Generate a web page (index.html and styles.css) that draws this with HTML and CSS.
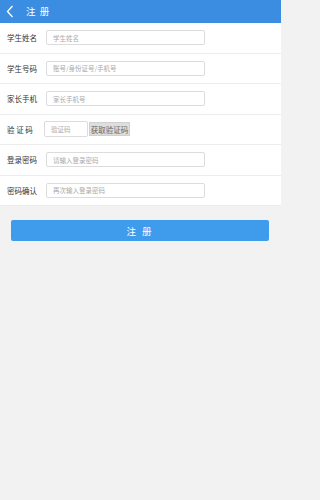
FILE: index.html
```html
<!DOCTYPE html>
<html lang="zh">
<head>
<meta charset="utf-8">
<title>注册</title>
<link rel="stylesheet" href="styles.css">
</head>
<body>
<header class="topbar">
  <span class="back">
    <svg width="8" height="13" viewBox="0 0 8 13"><path d="M6.5 1 L1.5 6.5 L6.5 12" fill="none" stroke="#fff" stroke-width="1.3"/></svg>
  </span>
  <span class="title">注 册</span>
</header>
<main class="form">
  <div class="row"><label class="label">学生姓名</label><input class="field" placeholder="学生姓名"></div>
  <div class="row"><label class="label">学生号码</label><input class="field" placeholder="账号/身份证号/手机号"></div>
  <div class="row"><label class="label">家长手机</label><input class="field" placeholder="家长手机号"></div>
  <div class="row"><label class="label label-code">验 证 码</label><input class="field field-code" placeholder="验证码"><button class="getcode">获取验证码</button></div>
  <div class="row"><label class="label">登录密码</label><input class="field" type="password" placeholder="请输入登录密码"></div>
  <div class="row"><label class="label">密码确认</label><input class="field" type="password" placeholder="再次输入登录密码"></div>
</main>
<div class="actions">
  <button class="submit">注 册</button>
</div>
</body>
</html>
```

FILE: styles.css
```css
* { box-sizing: border-box; }
html, body { margin: 0; padding: 0; }
html { background: #f2f2f2; }
body {
  background: #f2f2f2;
  font-family: "Noto Sans CJK SC", "Noto Sans", sans-serif;
  width: 281px;
  min-height: 500px;
}
.topbar {
  height: 23px;
  background: #3b8de2;
  display: flex;
  align-items: center;
  padding-left: 6px;
  color: #fff;
}
.back { display: flex; align-items: center; width: 20px; }
.title { font-size: 9.5px; letter-spacing: 1px; line-height: 1; }
.form { background: #fff; }
.row {
  height: 30.5px;
  border-bottom: 1px solid #ececec;
  display: flex;
  align-items: center;
  padding-left: 7px;
}
.label {
  width: 39px;
  font-size: 7.5px;
  color: #333;
  line-height: 1;
}
.label-code { width: 37px; }
.field {
  width: 159px;
  height: 15px;
  border: 1px solid #dcdcdc;
  border-radius: 2px;
  padding: 0 6px;
  font-family: inherit;
  font-size: 6.5px;
  color: #333;
  outline: none;
  background: #fff;
}
.field::placeholder { color: #aaa; }
.field-code { width: 44px; height: 16px; }
.getcode {
  margin-left: 1px;
  width: 41px;
  height: 14px;
  padding: 0;
  border: 1px solid #d0d0d0;
  background: #dedede;
  color: #666;
  font-family: inherit;
  font-size: 7.5px;
  line-height: 1;
}
.actions { padding: 14px 12px 0 11px; }
.submit {
  display: block;
  width: 100%;
  height: 21px;
  border: none;
  border-radius: 2px;
  background: #3f9beb;
  color: #fff;
  font-family: inherit;
  font-size: 9.5px;
  letter-spacing: 2px;
  padding: 0;
}
```
